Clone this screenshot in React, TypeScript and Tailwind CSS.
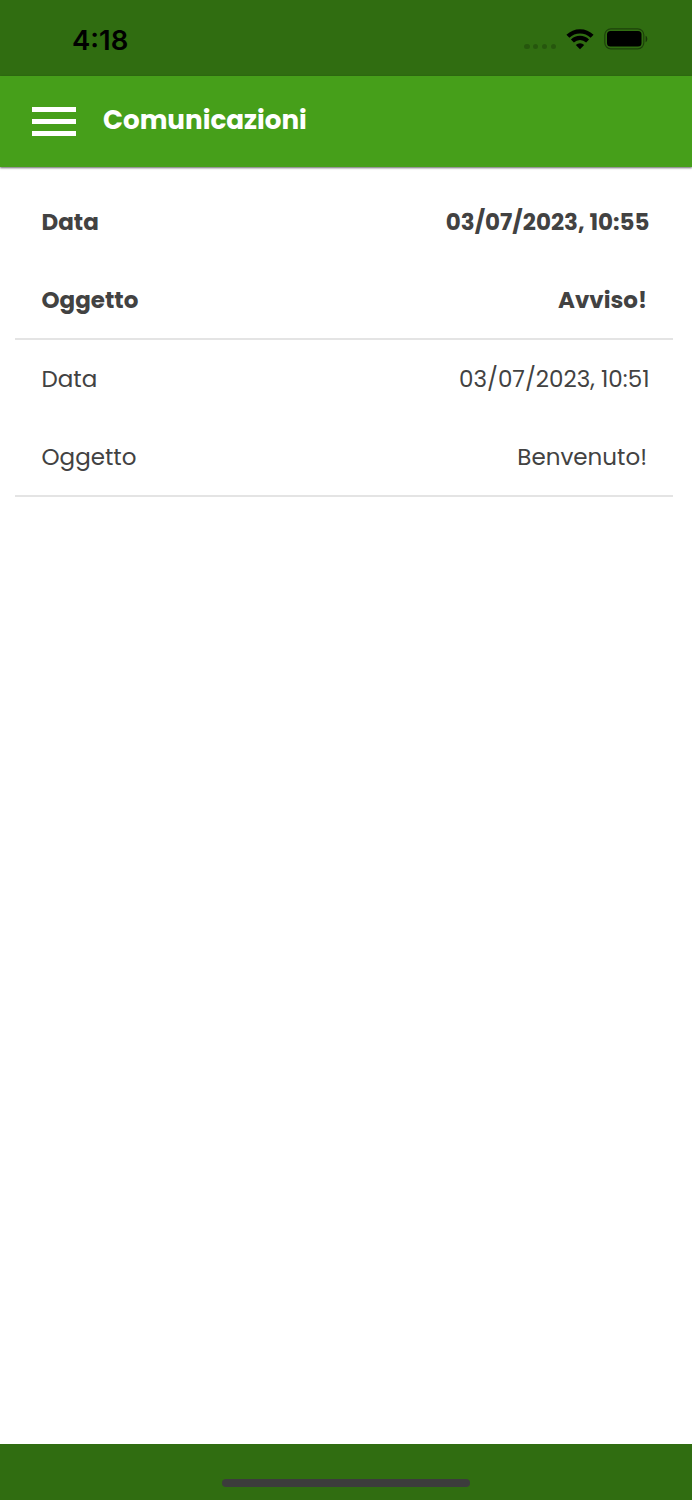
interface Message {
  id: number
  date: string
  subject: string
  read: boolean
}

const messages: Message[] = [
  { id: 1, date: '03/07/2023, 10:55', subject: 'Avviso!', read: false },
  { id: 2, date: '03/07/2023, 10:51', subject: 'Benvenuto!', read: true },
]

function StatusBar() {
  return (
    <div className="flex h-[76px] items-center justify-between bg-[#306d11] pl-[72px] pr-11 text-black">
      <span className="pt-[3px] font-['Inter',sans-serif] text-[27.5px] leading-8 font-semibold">4:18</span>
      <div className="flex items-center pt-0.5">
        <div className="flex gap-[3.4px] pt-[15px] pr-[9.5px]">
          {[0, 1, 2, 3].map((dot) => (
            <span key={dot} className="size-[5.4px] rounded-full bg-black/20" />
          ))}
        </div>
        <svg width="28" height="21" viewBox="0 0 28 21" fill="none" stroke="currentColor" strokeWidth="4.2">
          <path d="M1.9 7.3a17.2 17.2 0 0 1 24.2 0" />
          <path d="M6.4 12.1a10.8 10.8 0 0 1 15.2 0" />
          <path d="M9.8 16a6 6 0 0 1 8.4 0L14 20.3z" fill="currentColor" stroke="none" />
        </svg>
        <svg className="ml-[10.5px]" width="44" height="22" viewBox="0 0 44 22">
          <rect x="0.8" y="0.8" width="39" height="20" rx="6" fill="none" stroke="#000" strokeOpacity="0.4" strokeWidth="1.2" />
          <rect x="3" y="3" width="34.5" height="15.5" rx="3.5" />
          <path d="M41.6 7.8c2.3 1 2.3 5.4 0 6.4z" fillOpacity="0.5" />
        </svg>
      </div>
    </div>
  )
}

export default function App() {
  return (
    <div className="flex h-[1500px] w-[692px] flex-col bg-white font-['Poppins','Inter',sans-serif]">
      <StatusBar />

      <header className="flex h-[91px] items-center bg-[#469f1a] pl-8 text-white shadow-[0_1px_2px_rgba(0,0,0,0.6)]">
        <button className="flex w-[44px] flex-col gap-[7px]" aria-label="Menu">
          <span className="h-[5px] w-full bg-white" />
          <span className="h-[5px] w-full bg-white" />
          <span className="h-[5px] w-full bg-white" />
        </button>
        <h1 className="ml-[27px] pb-[3px] text-[26.2px] leading-8 font-bold whitespace-nowrap">Comunicazioni</h1>
      </header>

      <main className="flex-1 pt-4 pr-[19px] pl-[15px]">
        {messages.map((message) => (
          <div
            key={message.id}
            className={`h-[157px] border-b-2 border-[#e4e4e4] pr-[23.5px] pl-[26.5px] text-[23px] text-[#424242] ${
              message.read ? 'font-normal' : 'font-bold'
            }`}
          >
            <div className="flex h-[78px] items-center justify-between">
              <span>Data</span>
              <span>{message.date}</span>
            </div>
            <div className="flex h-[78px] items-center justify-between pr-[2.5px]">
              <span>Oggetto</span>
              <span>{message.subject}</span>
            </div>
          </div>
        ))}
      </main>

      <footer className="flex h-14 items-end justify-center bg-[#306d11] pb-[13.5px]">
        <div className="h-2 w-[248px] rounded-full bg-[#3c3c3c]" />
      </footer>
    </div>
  )
}
